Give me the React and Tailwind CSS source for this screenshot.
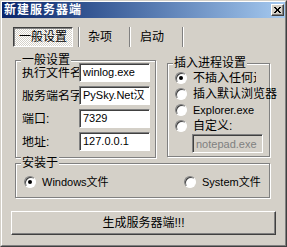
import React from 'react';

const font = "font-['Tahoma','Liberation_Sans','Noto_Sans_CJK_SC',sans-serif]";

const Radio = ({ checked }) => (
  <span className="relative inline-block w-[12px] h-[12px] shrink-0 rounded-full bg-white border border-t-[#808080] border-l-[#808080] border-r-white border-b-white shadow-[inset_1px_1px_0_#404040]">
    {checked && <span className="absolute left-[3px] top-[3px] w-[4px] h-[4px] rounded-full bg-black" />}
  </span>
);

const Field = ({ value, disabled, className = '' }) => (
  <div
    className={`h-[19px] flex items-center pl-[3px] overflow-hidden whitespace-nowrap text-[11px] border border-t-[#808080] border-l-[#808080] border-r-white border-b-white shadow-[inset_1px_1px_0_#404040] ${
      disabled ? 'bg-[#d4d0c8] text-[#808080]' : 'bg-white text-black'
    } ${className}`}
  >
    {value}
  </div>
);

const Group = ({ title, className = '', children }) => (
  <div className={`relative border border-[#808080] shadow-[inset_1px_1px_0_#ffffff,1px_1px_0_#ffffff] ${className}`}>
    <span className="absolute left-[5px] -top-[7px] px-px bg-[#d4d0c8] text-[12px] leading-[12px]">{title}</span>
    {children}
  </div>
);

const App = () => {
  const rows = [
    ['执行文件名', 'winlog.exe'],
    ['服务端名字', 'PySky.Net汉'],
    ['端口:', '7329'],
    ['地址:', '127.0.0.1'],
  ];

  return (
    <div className={`w-[287px] h-[247px] bg-[#d4d0c8] text-black ${font} border border-t-[#d4d0c8] border-l-[#d4d0c8] border-r-[#404040] border-b-[#404040]`}>
      <div className="h-full border border-t-white border-l-white border-r-[#808080] border-b-[#808080]">
        {/* Title bar */}
        <div className="h-[16px] flex items-center justify-between bg-gradient-to-r from-[#0a246a] to-[#a6caf0] pl-[2px] pr-[1px]">
          <span className="text-white font-bold text-[12px] leading-[12px] tracking-[1px]">新建服务器端</span>
          <div className="w-[13px] h-[12px] flex items-center justify-center bg-[#d4d0c8] border border-t-white border-l-white border-r-[#404040] border-b-[#404040] shadow-[inset_-1px_-1px_0_#808080]">
            <svg width="7" height="6" viewBox="0 0 7 6">
              <path d="M0 0h2v1h1v1h1V1h1V0h2v1H6v1H5v2h1v1h1v1H5V5H4V4H3v1H2v1H0V5h1V4h1V2H1V1H0z" fill="#000" />
            </svg>
          </div>
        </div>

        {/* Tabs */}
        <div className="flex items-stretch h-[20px] mt-[9px] ml-[11px] text-[12px]">
          <div className="w-[60px] flex items-center justify-center border border-t-[#404040] border-l-[#404040] border-r-white border-b-white shadow-[inset_1px_1px_0_#808080] bg-[image:repeating-conic-gradient(#ffffff_0%_25%,#d4d0c8_0%_50%)] bg-[length:2px_2px]">
            一般设置
          </div>
          <div className="ml-[5px] w-[2px] border-l border-l-[#808080] border-r border-r-white" />
          <div className="w-[49px] flex items-center pl-[8px]">杂项</div>
          <div className="w-[2px] border-l border-l-[#808080] border-r border-r-white" />
          <div className="w-[51px] flex items-center pl-[9px]">启动</div>
          <div className="w-[2px] border-l border-l-[#808080] border-r border-r-white" />
        </div>

        {/* Top groups */}
        <div className="flex items-start mt-[13px] ml-[13px]">
          <Group title="一般设置" className="w-[141px] h-[98px]">
            <div className="flex flex-col gap-[4px] pt-[2px] pl-[6px]">
              {rows.map(([label, value]) => (
                <div key={label} className="flex items-center h-[19px]">
                  <span className="w-[57px] overflow-hidden whitespace-nowrap text-[12px] leading-[12px]">{label}</span>
                  <Field value={value} className="w-[71px]" />
                </div>
              ))}
            </div>
          </Group>

          <Group title="插入进程设置" className="ml-[11px] mt-[3px] w-[103px] h-[94px]">
            <div className="flex flex-col pt-[6px] pl-[7px] text-[12px] leading-[12px]">
              <div className="flex items-center h-[16px]">
                <Radio checked />
                <span className="ml-[6px] w-[63px] overflow-hidden whitespace-nowrap">不插入任何进程</span>
              </div>
              <div className="flex items-center h-[16px]">
                <Radio />
                <span className="ml-[6px] whitespace-nowrap">插入默认浏览器</span>
              </div>
              <div className="flex items-center h-[16px]">
                <Radio />
                <span className="ml-[6px] whitespace-nowrap text-[11px]">Explorer.exe</span>
              </div>
              <div className="flex items-center h-[16px]">
                <Radio />
                <span className="ml-[6px] whitespace-nowrap">自定义:</span>
              </div>
              <Field value="notepad.exe" disabled className="ml-[17px] w-[71px]" />
            </div>
          </Group>
        </div>

        {/* Install location */}
        <Group title="安装于" className="mt-[5px] ml-[13px] w-[255px] h-[35px]">
          <div className="flex items-center pt-[12px] pl-[8px] text-[11px] leading-[12px]">
            <div className="flex items-center w-[160px]">
              <Radio checked />
              <span className="ml-[6px]">Windows文件</span>
            </div>
            <div className="flex items-center">
              <Radio />
              <span className="ml-[6px]">System文件</span>
            </div>
          </div>
        </Group>

        {/* Build button */}
        <div className="mt-[13px] ml-[9px] w-[265px] h-[24px] flex items-center justify-center text-[12px] border border-t-white border-l-white border-r-[#404040] border-b-[#404040] shadow-[inset_-1px_-1px_0_#808080]">
          生成服务器端!!!
        </div>
      </div>
    </div>
  );
};

export default App;
